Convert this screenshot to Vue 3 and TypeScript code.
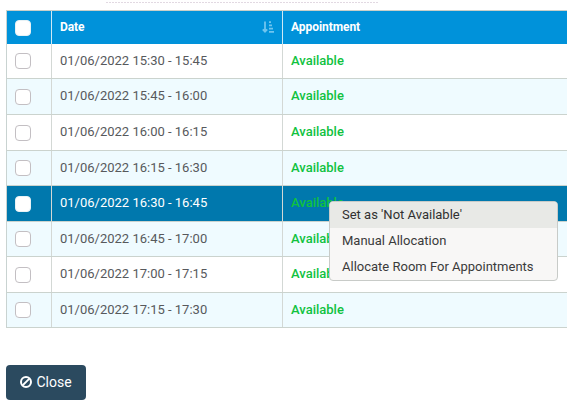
<script setup lang="ts">
interface Slot {
  time: string
  selected?: boolean
}

const slots: Slot[] = [
  { time: '01/06/2022 15:30 - 15:45' },
  { time: '01/06/2022 15:45 - 16:00' },
  { time: '01/06/2022 16:00 - 16:15' },
  { time: '01/06/2022 16:15 - 16:30' },
  { time: '01/06/2022 16:30 - 16:45', selected: true },
  { time: '01/06/2022 16:45 - 17:00' },
  { time: '01/06/2022 17:00 - 17:15' },
  { time: '01/06/2022 17:15 - 17:30' },
]

const actions: string[] = ["Set as 'Not Available'", 'Manual Allocation', 'Allocate Room For Appointments']
</script>

<template>
  <main class="page">
    <div class="panel-edge"></div>
    <section class="table">
      <div class="row head">
        <div class="cell check"><span class="box"></span></div>
        <div class="cell date">
          <span>Date</span>
          <svg class="sort" width="13" height="13" viewBox="0 0 13 13">
            <path d="M3 0.5v10M0.8 8.3L3 10.7l2.2-2.4M7 1.2h2M7 4.4h3M7 7.6h4M7 10.8h5" fill="none" stroke="currentColor" stroke-width="1.8" />
          </svg>
        </div>
        <div class="cell">Appointment</div>
      </div>
      <div v-for="slot in slots" :key="slot.time" class="row slot" :class="{ selected: slot.selected }">
        <div class="cell check"><span class="box"></span></div>
        <div class="cell date">{{ slot.time }}</div>
        <div class="cell status">Available</div>
      </div>
    </section>
    <button class="close" type="button">
      <svg width="12" height="12" viewBox="0 0 12 12">
        <circle cx="6" cy="6" r="5" fill="none" stroke="currentColor" stroke-width="2" />
        <path d="M2.6 9.4L9.4 2.6" stroke="currentColor" stroke-width="2" />
      </svg>
      <span>Close</span>
    </button>
    <ul class="menu">
      <li v-for="(action, i) in actions" :key="action" :class="{ active: i === 0 }">{{ action }}</li>
    </ul>
  </main>
</template>

<style>
body {
  background: #fff;
  overflow: hidden;
}
</style>

<style scoped>
.page {
  position: relative;
  box-sizing: border-box;
  height: 409px;
  padding: 2px 0 0 6px;
  overflow: hidden;
  font-family: Roboto, "Liberation Sans", sans-serif;
  font-size: 13px;
  color: #57595c;
}
.panel-edge {
  width: 272px;
  height: 1px;
  margin: 0 0 7px 100px;
  background: repeating-linear-gradient(90deg, #e2d9e2 0 2px, #fff 2px 3px);
}
.table {
  display: grid;
  grid-template-rows: 33px 35px 36px 36px 35px 36px 35px 36px 35px;
  border-top: 1px solid #c9cfc9;
  border-left: 1px solid #c9d3d1;
}
.row {
  display: grid;
  grid-template-columns: 45px 231px 1fr;
}
.cell {
  box-sizing: border-box;
  display: flex;
  align-items: center;
  padding-left: 8px;
  border-right: 1px solid #d3d8d5;
}
.cell:last-child {
  border-right: 0;
}
.head {
  background: #0092da;
  color: #fff;
  font-size: 12px;
  font-weight: 700;
  letter-spacing: -0.06px;
}
.head .cell {
  padding-bottom: 1px;
  border-color: #cfe9f5;
}
.head .check {
  padding-bottom: 0;
}
.head .date {
  justify-content: space-between;
  padding-right: 7px;
}
.sort {
  color: #70c5ef;
}
.slot {
  border-bottom: 1px solid #cbd3ce;
}
.slot:nth-child(odd) {
  background: #effbff;
}
.slot .date,
.slot .status {
  align-items: flex-start;
  padding-top: 9px;
  line-height: 15px;
}
.slot.selected {
  background: #0078ad;
  color: #fff;
}
.status {
  color: #10c23f;
  font-weight: 500;
}
.box {
  box-sizing: border-box;
  width: 16px;
  height: 16px;
  border: 1px solid #c3bfc3;
  border-radius: 4px;
  background: #fff;
}
.head .box,
.selected .box {
  border-color: #e8f2f6;
}
.close {
  display: flex;
  align-items: center;
  justify-content: center;
  gap: 4px;
  width: 80px;
  height: 35px;
  margin-top: 37px;
  padding: 0 0 2px;
  border: 0;
  border-radius: 4px;
  background: #2b4a5f;
  color: #fff;
  font-family: inherit;
  font-size: 14px;
}
.menu {
  position: absolute;
  left: 329px;
  top: 201px;
  box-sizing: border-box;
  width: 229px;
  height: 80px;
  margin: 0;
  padding: 0;
  list-style: none;
  overflow: hidden;
  border: 1px solid #c8cbc8;
  border-radius: 4px;
  background: #f8f7f6;
  color: #3b3b3b;
}
.menu li {
  height: 26px;
  padding-left: 12px;
  line-height: 26px;
}
.menu .active {
  background: #e8e9e6;
  color: #303030;
}
</style>
